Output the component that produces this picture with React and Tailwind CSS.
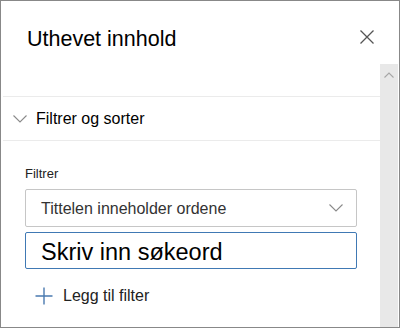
import React from 'react';

function Chevron({ className, stroke = '#8a8a8a' }) {
  return (
    <svg className={className} viewBox="0 0 14 8" fill="none">
      <path d="M0.5 0.5 L7 7 L13.5 0.5" stroke={stroke} strokeWidth="1.1" />
    </svg>
  );
}

function App() {
  return (
    <div className="w-[400px] h-[328px] border border-[#888888] bg-white flex flex-col overflow-hidden font-['Liberation_Sans',Arial,sans-serif]">
      {/* Header */}
      <div className="h-[63px] shrink-0 flex items-start justify-between pl-[26px] pr-[25px] pt-[24px]">
        <h1 className="text-[21.5px] leading-[28px] text-black">Uthevet innhold</h1>
        <button className="mt-[5px] w-[14px] h-[14px]">
          <svg viewBox="0 0 14 14" className="w-[14px] h-[14px]" fill="none">
            <path d="M0.5 0.5 L13.5 13.5 M13.5 0.5 L0.5 13.5" stroke="#555555" strokeWidth="1.3" />
          </svg>
        </button>
      </div>

      <div className="flex-1 flex pr-px">
        {/* Scrollable content */}
        <div className="flex-1 flex flex-col">
          <div className="h-[32px]" />
          <div className="ml-[2px] h-px bg-[#ebebeb]" />
          <div className="h-[43px] flex items-center ml-[2px]">
            <Chevron className="ml-[10px] w-[14px] h-[8px]" />
            <span className="ml-[9px] text-[16px] leading-[20px] text-black">Filtrer og sorter</span>
          </div>
          <div className="ml-[2px] h-px bg-[#ebebeb]" />

          <div className="pl-[24px] pt-[25px] flex flex-col">
            <label className="text-[13px] leading-[16px] text-[#222222]">Filtrer</label>
            <div className="mt-[7px] w-[332px] h-[38px] border border-[#c6c6c6] rounded-[2px] flex items-center justify-between pl-[15px] pr-[13px] pt-[2px]">
              <span className="text-[16px] leading-[20px] text-[#333333]">Tittelen inneholder ordene</span>
              <Chevron className="w-[14px] h-[8px] -mt-[2px]" />
            </div>
            <div className="mt-[5px] w-[332px] h-[37px] border border-[#4079b4] rounded-[2px] flex items-center pl-[15px] pt-[3px]">
              <span className="text-[23.5px] leading-[26px] text-black">Skriv inn søkeord</span>
            </div>
            <button className="mt-[12px] h-[30px] flex items-center ml-[10px]">
              <svg viewBox="0 0 18 18" className="w-[18px] h-[18px]" fill="none">
                <path d="M9 0.5 V17.5 M0.5 9 H17.5" stroke="#4a7ab0" strokeWidth="1.4" />
              </svg>
              <span className="ml-[10px] text-[16px] leading-[20px] text-[#222222]">Legg til filter</span>
            </button>
          </div>
        </div>

        {/* Scrollbar */}
        <div className="w-[18px] bg-[#e8e8e8] flex justify-center pt-[8px]">
          <svg viewBox="0 0 10 6" className="w-[10px] h-[6px]" fill="none">
            <path d="M0.5 5.5 L5 1 L9.5 5.5" stroke="#a6a6a6" strokeWidth="1.1" />
          </svg>
        </div>
      </div>
    </div>
  );
}

export default App;
